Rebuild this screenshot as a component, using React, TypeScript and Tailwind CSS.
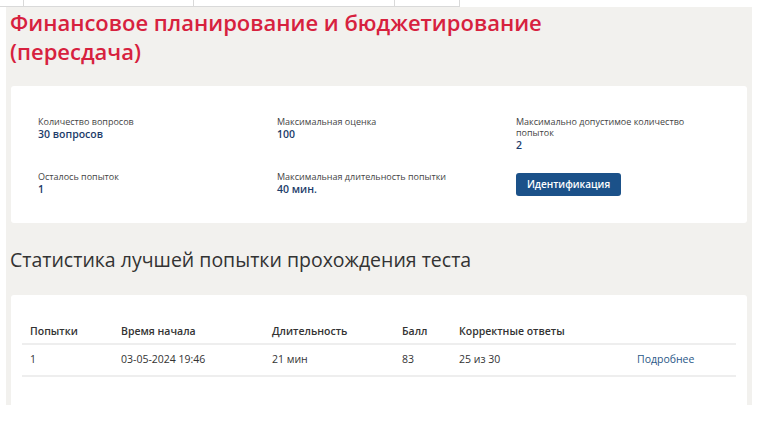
import React from "react";

function InfoItem({ label, value }: { label: string; value: string }) {
  return (
    <div className="flex flex-col gap-[1px]">
      <div className="text-[9px] leading-[11px] text-[#444]">{label}</div>
      <div className="text-[10.5px] leading-[12px] font-semibold text-[#1d3c6a]">{value}</div>
    </div>
  );
}

export default function App() {
  const rows = [
    { attempt: "1", start: "03-05-2024 19:46", duration: "21 мин", score: "83", correct: "25 из 30" },
  ];
  return (
    <div className="w-[761px] h-[441px] bg-white font-['Open_Sans',sans-serif] overflow-hidden">
      <div className="flex h-[7px]">
        <div className="w-[24px] border-r border-b border-[#d9d9d9]" />
        <div className="w-[170px] border-r border-b border-[#d9d9d9]" />
        <div className="w-[201px] border-r border-b border-[#d9d9d9]" />
        <div className="w-[65px] border-r border-b border-[#d9d9d9]" />
      </div>
      <div className="ml-[6px] mr-[9px] h-[398px] bg-[#f2f1ee] flex flex-col">
        <h1 className="pl-[4px] pt-[1px] text-[22px] leading-[29px] font-semibold text-[#d7213e]">
          Финансовое планирование и бюджетирование
          <br />
          (пересдача)
        </h1>
        <div className="mx-[5px] mt-[20px] h-[137px] bg-white rounded-[3px] pl-[27px] pt-[30px]">
          <div className="grid grid-cols-[239px_239px_185px] gap-y-[20px]">
            <InfoItem label="Количество вопросов" value="30 вопросов" />
            <InfoItem label="Максимальная оценка" value="100" />
            <InfoItem label="Максимально допустимое количество попыток" value="2" />
            <InfoItem label="Осталось попыток" value="1" />
            <InfoItem label="Максимальная длительность попытки" value="40 мин." />
            <div className="-mt-[1px]">
              <button className="h-[23px] w-[105px] rounded-[3px] bg-[#1b5189] text-white text-[10px] font-semibold">
                Идентификация
              </button>
            </div>
          </div>
        </div>
        <h2 className="pl-[4px] mt-[24px] text-[19.5px] leading-[26px] text-[#333]">
          Статистика лучшей попытки прохождения теста
        </h2>
        <div className="mx-[5px] mt-[22px] flex-1 bg-white rounded-t-[3px] px-[11px] pt-[25px]">
          <table className="w-full text-[10.5px] text-[#333] border-collapse">
            <thead>
              <tr className="border-b-2 border-[#eeeeee] text-left">
                <th className="w-[99px] pl-[8px] font-semibold h-[24px]">Попытки</th>
                <th className="w-[151px] font-semibold">Время начала</th>
                <th className="w-[130px] font-semibold">Длительность</th>
                <th className="w-[57px] font-semibold">Балл</th>
                <th className="w-[178px] font-semibold">Корректные ответы</th>
                <th />
              </tr>
            </thead>
            <tbody>
              {rows.map((r, i) => (
                <tr key={i} className="border-b-2 border-[#eeeeee] h-[32px]">
                  <td className="pl-[8px]">{r.attempt}</td>
                  <td>{r.start}</td>
                  <td>{r.duration}</td>
                  <td>{r.score}</td>
                  <td>{r.correct}</td>
                  <td className="text-[#2b5887]">Подробнее</td>
                </tr>
              ))}
            </tbody>
          </table>
        </div>
      </div>
    </div>
  );
}
